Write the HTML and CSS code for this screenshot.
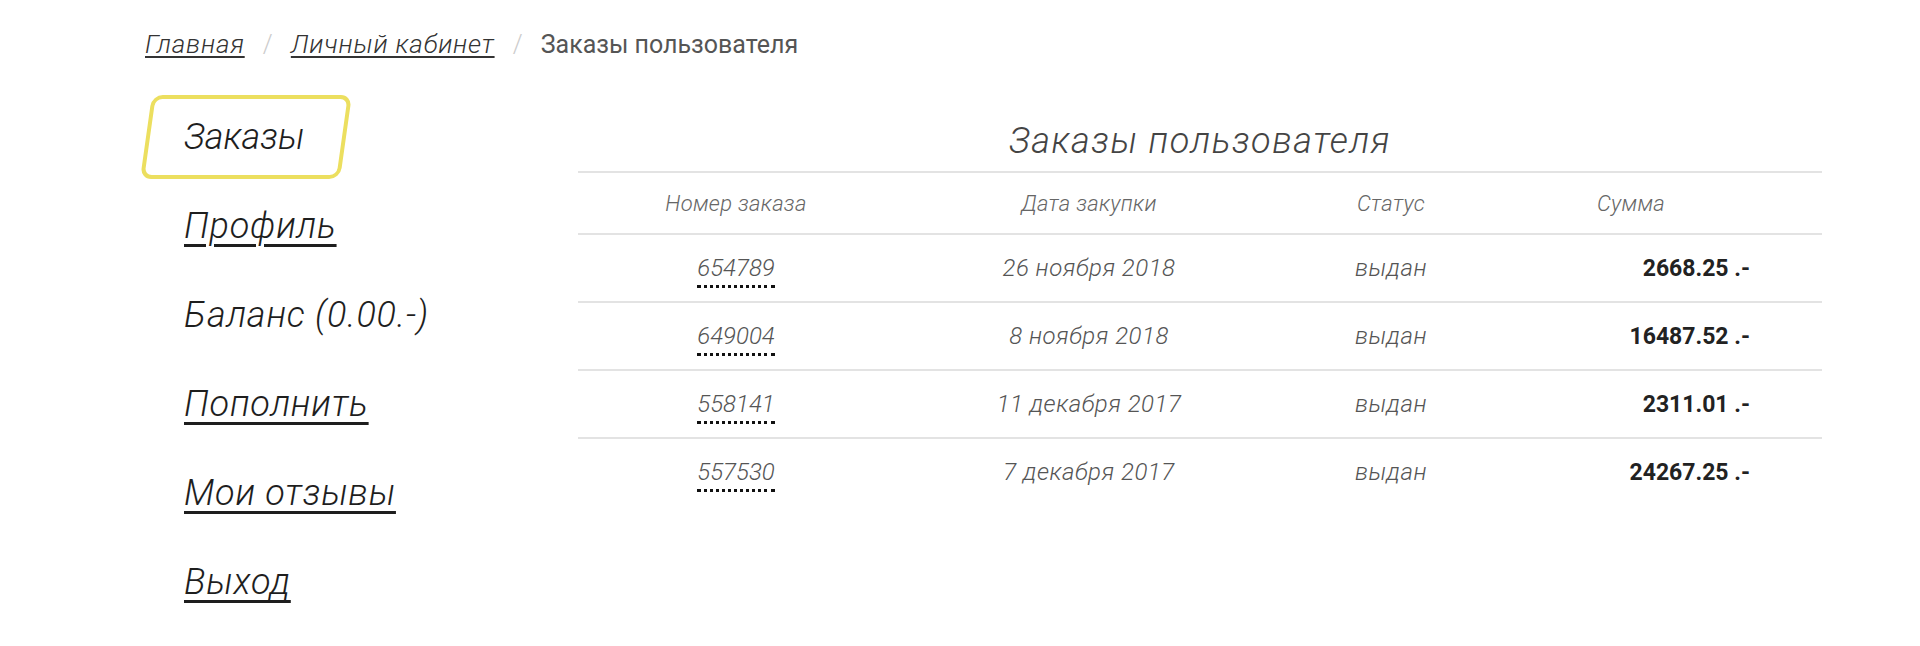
FILE: index.html
```html
<!DOCTYPE html>
<html lang="ru">
<head>
  <meta charset="utf-8">
  <title>Заказы пользователя</title>
  <link rel="stylesheet" href="styles.css">
</head>
<body>
  <div class="page">
    <div class="crumbs">
      <a href="#">Главная</a>
      <span class="sep">/</span>
      <a href="#">Личный кабинет</a>
      <span class="sep">/</span>
      <span class="current">Заказы пользователя</span>
    </div>

    <div class="cabinet">
      <ul class="menu">
        <li><span class="item active">Заказы</span></li>
        <li><a class="item" href="#">Профиль</a></li>
        <li><span class="item">Баланс (0.00.-)</span></li>
        <li><a class="item" href="#">Пополнить</a></li>
        <li><a class="item" href="#">Мои отзывы</a></li>
        <li><a class="item" href="#">Выход</a></li>
      </ul>

      <div class="orders">
        <h1>Заказы пользователя</h1>
        <div class="row head">
          <div>Номер заказа</div>
          <div>Дата закупки</div>
          <div>Статус</div>
          <div>Сумма</div>
          <div></div>
        </div>
        <div class="row">
          <div><a class="num" href="#">654789</a></div>
          <div>26 ноября 2018</div>
          <div>выдан</div>
          <div class="sum">2668.25 .-</div>
          <div></div>
        </div>
        <div class="row">
          <div><a class="num" href="#">649004</a></div>
          <div>8 ноября 2018</div>
          <div>выдан</div>
          <div class="sum">16487.52 .-</div>
          <div></div>
        </div>
        <div class="row">
          <div><a class="num" href="#">558141</a></div>
          <div>11 декабря 2017</div>
          <div>выдан</div>
          <div class="sum">2311.01 .-</div>
          <div></div>
        </div>
        <div class="row">
          <div><a class="num" href="#">557530</a></div>
          <div>7 декабря 2017</div>
          <div>выдан</div>
          <div class="sum">24267.25 .-</div>
          <div></div>
        </div>
      </div>
    </div>
  </div>
</body>
</html>
```

FILE: styles.css
```css
body {
  margin: 0;
  background: #FFF;
  color: #222;
  font-family: Roboto, "Liberation Sans", sans-serif;
  font-weight: 300;
}

.page {
  padding: 30px 0 0 140px;
}

/* breadcrumbs */
.crumbs {
  font-size: 25px;
  height: 29px;
  line-height: 29px;
  padding-left: 5px;
}

.crumbs a {
  color: #333;
  font-size: 26px;
  font-style: italic;
  letter-spacing: 0.8px;
  text-decoration: underline;
  text-decoration-thickness: 2px;
  text-underline-offset: 3px;
}

.crumbs .sep {
  color: #CCC;
  margin: 0 12px;
}

.crumbs .current {
  color: #555;
  font-weight: 400;
}

.cabinet {
  display: flex;
  margin-top: 36px;
}

/* left menu */
.menu {
  list-style: none;
  margin: 0;
  padding: 0 0 0 6px;
  width: 432px;
  display: flex;
  flex-direction: column;
  gap: 5px;
}

.menu li {
  height: 84px;
}

.item {
  position: relative;
  display: inline-block;
  height: 84px;
  line-height: 84px;
  padding: 0 35px 0 38px;
  font-size: 36px;
  font-style: italic;
  letter-spacing: 0.8px;
  color: #1E1E1E;
}

a.item {
  text-decoration: underline;
  text-decoration-thickness: 3px;
  text-underline-offset: 6px;
}

.item.active {
  width: 127px;
  letter-spacing: 0;
}

.item.active::before {
  content: "";
  position: absolute;
  left: 0;
  top: 0;
  right: 0;
  bottom: 0;
  border: 4px solid #ECDF5F;
  border-radius: 11px;
  transform: skewX(-8deg);
}

/* orders table */
.orders {
  width: 1244px;
}

.orders h1 {
  margin: 25px 0 9px;
  font-size: 36px;
  font-weight: 300;
  font-style: italic;
  line-height: 42px;
  letter-spacing: 1.5px;
  text-align: center;
  color: #444;
}

.row {
  display: grid;
  grid-template-columns: 316px 390px 214px 266px 1fr;
  align-items: center;
  height: 66px;
  border-top: 2px solid #E3E3E3;
  text-align: center;
  font-size: 24px;
  font-style: italic;
  letter-spacing: 0.5px;
  color: #555;
}

.row.head {
  height: 60px;
  font-size: 22px;
  letter-spacing: 0.3px;
  color: #666;
}

.num {
  color: #555;
  letter-spacing: 0;
  text-decoration: none;
  padding-bottom: 3px;
  border-bottom: 3px dotted #111;
}

.sum {
  text-align: right;
  padding-right: 14px;
  font-style: normal;
  font-weight: 700;
  font-size: 23px;
  letter-spacing: 0;
  color: #222;
}

.row.head .sum {
  text-align: center;
}
```
